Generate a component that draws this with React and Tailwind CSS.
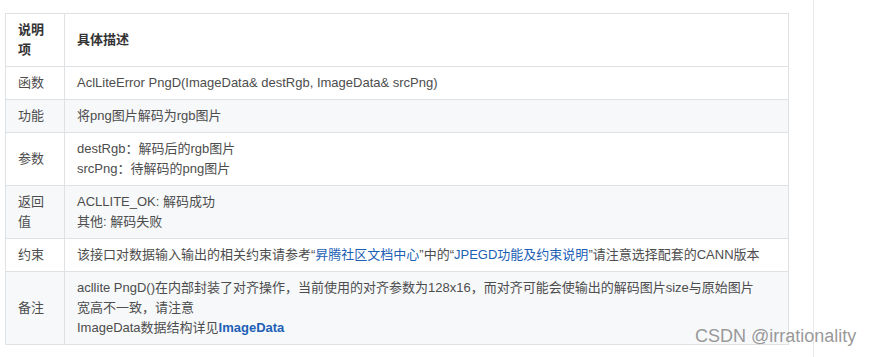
const FONT = { fontFamily: '"Liberation Sans", "Noto Sans CJK SC", sans-serif' };

const Link = ({ children, bold }) => (
  <span className={bold ? "text-[#1d5fb5] font-bold" : "text-[#1d5fb5]"}>{children}</span>
);

const rows = [
  {
    label: "函数",
    body: "AclLiteError PngD(ImageData& destRgb, ImageData& srcPng)",
  },
  { label: "功能", body: "将png图片解码为rgb图片" },
  {
    label: "参数",
    body: (
      <>
        destRgb：解码后的rgb图片
        <br />
        srcPng：待解码的png图片
      </>
    ),
  },
  {
    label: "返回值",
    body: (
      <>
        ACLLITE_OK: 解码成功
        <br />
        其他: 解码失败
      </>
    ),
  },
  {
    label: "约束",
    nowrap: true,
    body: (
      <>
        该接口对数据输入输出的相关约束请参考“<Link>昇腾社区文档中心</Link>”中的“
        <Link>JPEGD功能及约束说明</Link>”请注意选择配套的CANN版本
      </>
    ),
  },
  {
    label: "备注",
    body: (
      <>
        acllite PngD()在内部封装了对齐操作，当前使用的对齐参数为128x16，而对齐可能会使输出的解码图片size与原始图片
        <br />
        宽高不一致，请注意
        <br />
        ImageData数据结构详见<Link bold>ImageData</Link>
      </>
    ),
  },
];

export default function App() {
  return (
    <div className="relative flex w-[873px] h-[357px] bg-white overflow-hidden" style={FONT}>
      <div className="w-[813px] pl-[5px] pt-[13px]">
        <table className="table-fixed w-[784px] border-collapse text-[13px] leading-[20px] text-[#4d4d4d]">
          <colgroup>
            <col className="w-[59px]" />
            <col />
          </colgroup>
          <thead>
            <tr className="bg-white">
              <th className="border border-[#dfe2e5] px-[12px] py-[6px] text-left font-bold text-[#333]">说明项</th>
              <th className="border border-[#dfe2e5] px-[12px] py-[6px] text-left font-bold text-[#333]">具体描述</th>
            </tr>
          </thead>
          <tbody>
            {rows.map((r, i) => (
              <tr key={r.label} className={i % 2 === 1 ? "bg-[#f6f8fa]" : "bg-white"}>
                <td className="border border-[#dfe2e5] px-[12px] py-[6px] align-middle">{r.label}</td>
                <td
                  className={
                    r.nowrap
                      ? "border border-[#dfe2e5] px-[12px] py-[6px] align-middle whitespace-nowrap overflow-hidden"
                      : "border border-[#dfe2e5] px-[12px] py-[6px] align-middle"
                  }
                >
                  {r.body}
                </td>
              </tr>
            ))}
          </tbody>
        </table>
      </div>
      <div className="flex-1 border-l border-[#e8e8e8]" />
      <div
        className="absolute left-[695px] top-[325px] text-[18px] leading-[22px] text-[#8c8c8c]/90"
        style={{ fontFamily: '"Liberation Sans", Arial, sans-serif' }}
      >
        CSDN @irrationality
      </div>
    </div>
  );
}
